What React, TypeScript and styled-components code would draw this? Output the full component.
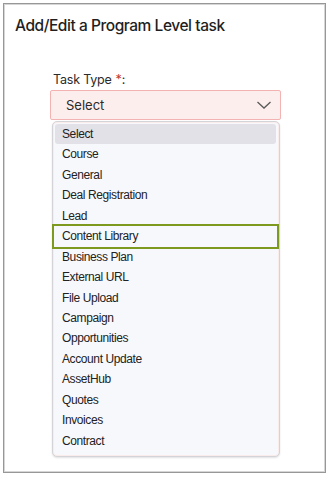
import React from "react";
import styled, { createGlobalStyle } from "styled-components";

const Global = createGlobalStyle`
  html, body { margin: 0; padding: 0; background: #ffffff; }
  body { font-family: Inter, "Liberation Sans", sans-serif; }
`;

const Panel = styled.div`
  margin: 3px 0 0 3px;
  width: 323px;
  height: 470px;
  box-sizing: border-box;
  border: 1px solid #979797;
  box-shadow: inset 0 0 0 1px #d6d6d6;
  background: #fff;
  display: flex;
  flex-direction: column;
`;

const Title = styled.h1`
  margin: 0;
  padding: 12px 0 0 11px;
  font-family: Inter, "Liberation Sans", sans-serif;
  font-weight: 500;
  font-size: 15.5px;
  letter-spacing: -0.45px;
  line-height: 19px;
  color: #1f1f1f;
`;

const Field = styled.div`
  display: flex;
  flex-direction: column;
  padding: 37px 0 0 46px;
`;

const Label = styled.label`
  font-family: Inter, "Liberation Sans", sans-serif;
  font-size: 12.5px;
  letter-spacing: -0.2px;
  line-height: 16px;
  color: #2b2b2b;
  padding-left: 3px;
  margin-bottom: 2px;
`;

const Req = styled.span`
  color: #c0392b;
  margin-left: 4px;
`;

const SelectBox = styled.div`
  width: 231px;
  height: 30px;
  box-sizing: border-box;
  border: 1px solid #f4b3b3;
  border-radius: 2px;
  background: #fdeeee;
  display: flex;
  align-items: center;
  justify-content: space-between;
  padding: 0 8px 0 15px;
  font-family: Inter, "Liberation Sans", sans-serif;
  font-size: 13px;
  color: #2a2a2a;
`;

const Menu = styled.ul`
  list-style: none;
  margin: 1px 0 0 2px;
  width: 228px;
  box-sizing: border-box;
  padding: 2px 0 5px;
  border: 1px solid #d3d3d8;
  border-radius: 5px;
  background: #f7f8fc;
  box-shadow: 0 1px 2px rgba(0, 0, 0, 0.12), inset 0 0 0 1px #fbecec;
`;

const Item = styled.li<{ $selected?: boolean; $focused?: boolean }>`
  margin: 0 3px 0 2px;
  height: 20.45px;
  line-height: 20.45px;
  padding-left: 7px;
  border-radius: 3px;
  font-family: "Liberation Sans", Arial, sans-serif;
  font-size: 12px;
  letter-spacing: -0.4px;
  color: #222;
  background: ${(p) => (p.$selected ? "#e1e1e7" : "transparent")};
  outline: ${(p) => (p.$focused ? "2px solid #7d9a1e" : "none")};
  ${(p) => (p.$focused ? "border-radius: 0; margin: 0 2px 0 1px; padding-left: 8px;" : "")}
`;

const options = [
  "Select",
  "Course",
  "General",
  "Deal Registration",
  "Lead",
  "Content Library",
  "Business Plan",
  "External URL",
  "File Upload",
  "Campaign",
  "Opportunities",
  "Account Update",
  "AssetHub",
  "Quotes",
  "Invoices",
  "Contract",
];

const Chevron = () => (
  <svg width="16" height="10" viewBox="0 0 16 10">
    <polyline points="1.5,2 8,8 14.5,2" fill="none" stroke="#5a5a5a" strokeWidth="1.3" />
  </svg>
);

export default function App() {
  return (
    <>
      <Global />
      <Panel>
        <Title>Add/Edit a Program Level task</Title>
        <Field>
          <Label>
            Task Type<Req>*</Req>:
          </Label>
          <SelectBox>
            <span>Select</span>
            <Chevron />
          </SelectBox>
          <Menu>
            {options.map((o) => (
              <Item key={o} $selected={o === "Select"} $focused={o === "Content Library"}>
                {o}
              </Item>
            ))}
          </Menu>
        </Field>
      </Panel>
    </>
  );
}
